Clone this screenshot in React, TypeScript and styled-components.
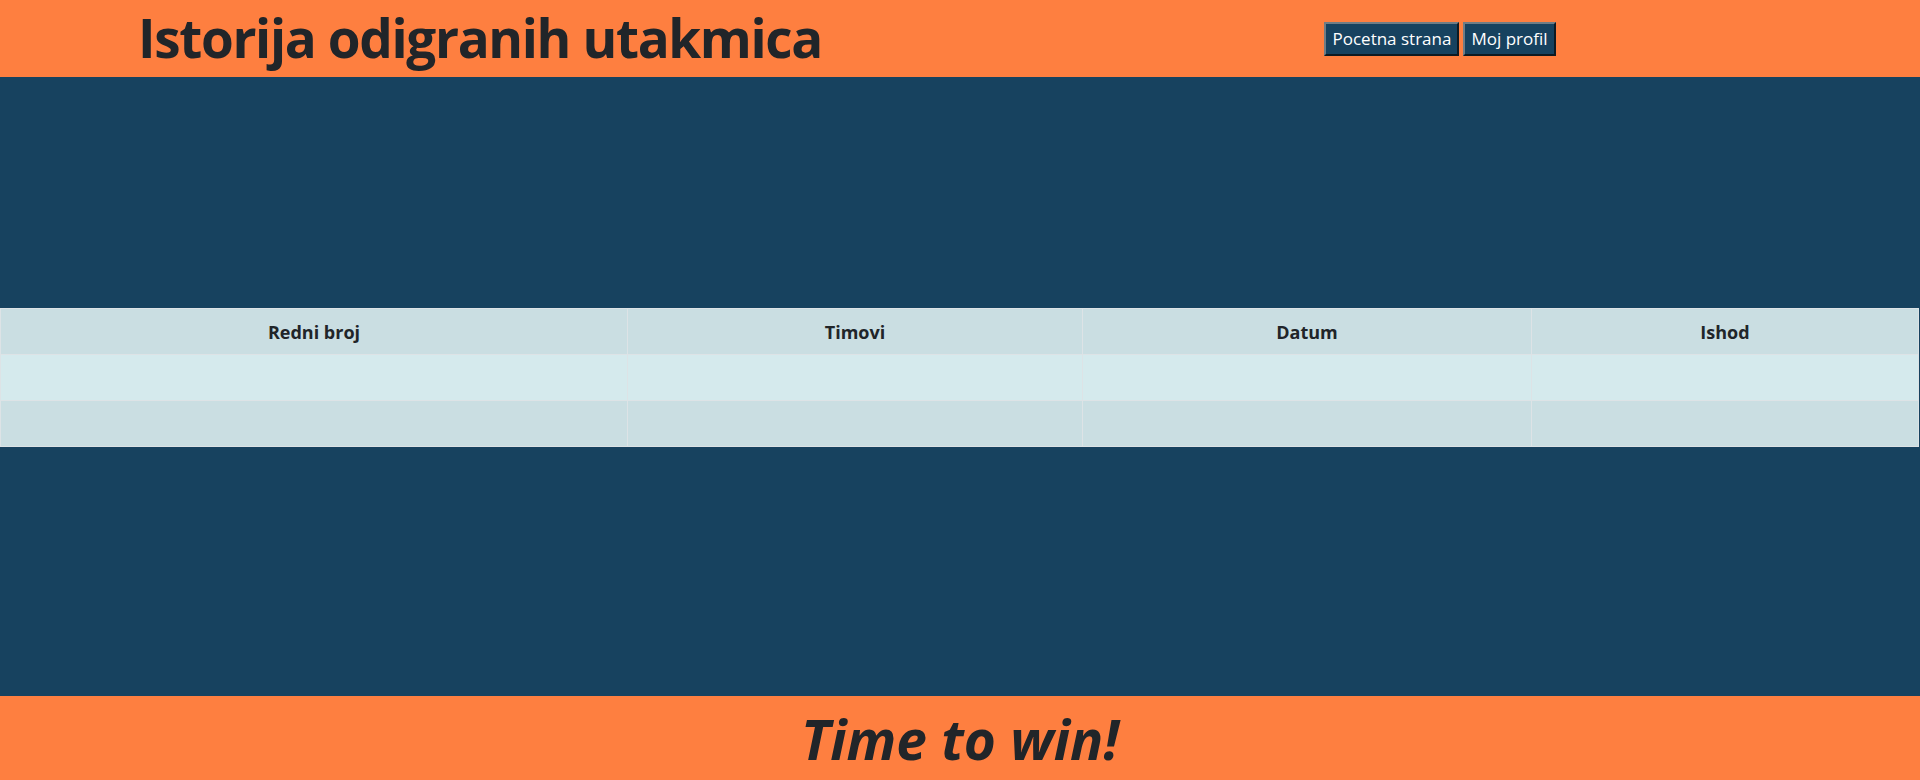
import * as React from 'react'
import styled, { createGlobalStyle } from 'styled-components'

const GlobalStyle = createGlobalStyle`
    html, body {
        margin: 0;
        padding: 0;
    }
    body {
        font-family: 'Open Sans', 'Noto Sans', sans-serif;
        color: #212529;
        background: #17425f;
    }
`

const colorOrange = '#fe7f40'
const colorNavy = '#17425f'
const colorDarkText = '#212529'

const Page = styled.div`
    display: flex;
    flex-direction: column;
    min-height: 780px;
    background: ${colorNavy};
`

const Header = styled.header`
    display: flex;
    align-items: center;
    height: 77px;
    background: ${colorOrange};
`

const HeaderHalf = styled.div`
    flex: 1;
    display: flex;
    justify-content: center;
    align-items: center;
    gap: 4px;
`

const PageTitle = styled.h1`
    margin: 0;
    font-size: 53px;
    font-weight: 700;
    letter-spacing: -1.35px;
    line-height: 1.2;
    color: ${colorDarkText};
    padding-bottom: 2px;
`

const NavButton = styled.button`
    height: 34px;
    padding: 0 6px;
    font-family: 'Open Sans', 'Noto Sans', sans-serif;
    font-size: 17px;
    color: #ffffff;
    background: ${colorNavy};
    border-width: 2px;
    border-style: solid;
    border-color: #6f7d86 #0e1a22 #0e1a22 #6f7d86;
    cursor: pointer;
`

const Main = styled.main`
    flex: 1;
    padding-top: 231px;
`

const HistoryTable = styled.table`
    width: 1918px;
    border-collapse: collapse;
    table-layout: fixed;
    font-size: 18px;
    color: ${colorDarkText};
`

const Cell = styled.td<{ $striped?: boolean }>`
    height: 45px;
    padding: 0 8px;
    text-align: center;
    border: 1px solid #dde3e6;
    background: ${(p) => (p.$striped ? '#d5eaed' : '#cadee2')};
`

const HeadCell = styled(Cell).attrs({ as: 'th' })`
    font-weight: 700;
`

const Footer = styled.footer`
    display: flex;
    justify-content: center;
    align-items: center;
    height: 84px;
    background: ${colorOrange};
`

const Slogan = styled.h1`
    margin: 0;
    font-size: 55px;
    font-style: italic;
    font-weight: 700;
    letter-spacing: 0;
    color: ${colorDarkText};
`

const columns = [
    { label: 'Redni broj', width: 627 },
    { label: 'Timovi', width: 455 },
    { label: 'Datum', width: 449 },
    { label: 'Ishod', width: 387 },
]

const rows = [{ id: 1 }, { id: 2 }]

const App = () => (
    <Page>
        <GlobalStyle />
        <Header>
            <HeaderHalf>
                <PageTitle>Istorija odigranih utakmica</PageTitle>
            </HeaderHalf>
            <HeaderHalf>
                <NavButton>Pocetna strana</NavButton>
                <NavButton>Moj profil</NavButton>
            </HeaderHalf>
        </Header>
        <Main>
            <HistoryTable>
                <colgroup>
                    {columns.map((c) => (
                        <col key={c.label} style={{ width: c.width }} />
                    ))}
                </colgroup>
                <thead>
                    <tr>
                        {columns.map((c) => (
                            <HeadCell key={c.label}>{c.label}</HeadCell>
                        ))}
                    </tr>
                </thead>
                <tbody>
                    {rows.map((r, i) => (
                        <tr key={r.id}>
                            {columns.map((c) => (
                                <Cell key={c.label} $striped={i % 2 === 0} />
                            ))}
                        </tr>
                    ))}
                </tbody>
            </HistoryTable>
        </Main>
        <Footer>
            <Slogan>Time to win!</Slogan>
        </Footer>
    </Page>
)

export default App
